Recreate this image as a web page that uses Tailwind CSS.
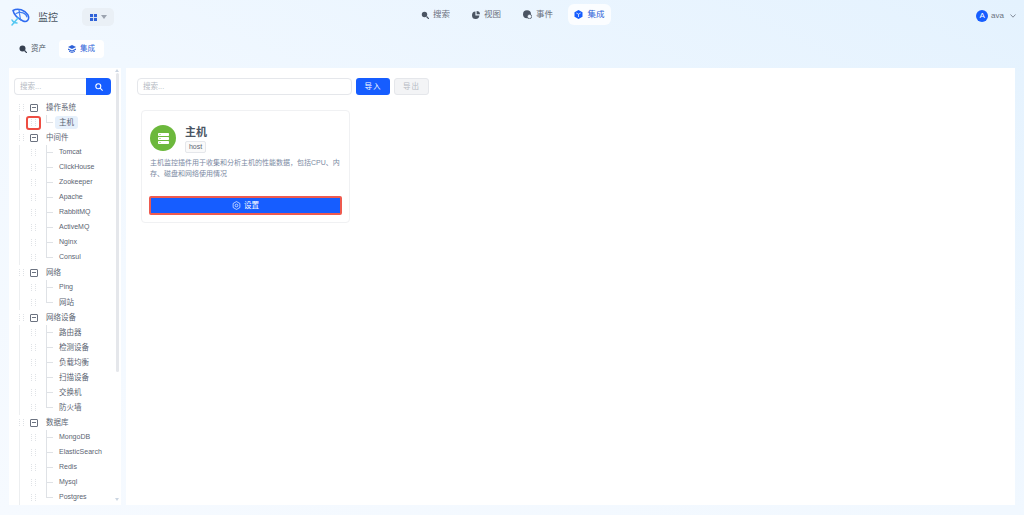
<!DOCTYPE html>
<html lang="zh">
<head>
  <meta charset="UTF-8">
  <title>监控</title>
  <script src="https://cdn.jsdelivr.net/npm/@tailwindcss/browser@4"></script>
</head>
<body class="w-[1024px] h-[515px] overflow-hidden bg-linear-to-tr from-[#f6faff] via-[#f1f8ff] to-[#e4f2fe] font-['Liberation_Sans','Noto_Sans_CJK_SC',sans-serif] text-[7.5px] text-[#5b6472]">
  <!-- top bar -->
  <header class="h-[34px] flex items-center relative">
    <div class="w-[126px] flex items-center pl-[10px]">
      <svg class="w-[20px] h-[20px]" viewBox="0 0 20 20" fill="none">
        <path d="M3 3.500C8 .5 15 3 18 8c2 4-1 8-5 6-4-2-9-6-10-10.500z" stroke="#2f6bf0" stroke-width="1.500"/>
        <path d="M6 6.500C11 4 16 6 17 10M9 3l1.500 10" stroke="#3f7df3" stroke-width="1.200" stroke-linecap="round"/>
        <path d="M2 18l6-7M2 13c1 2 3 3 5 3" stroke="#54c8f2" stroke-width="1.500" stroke-linecap="round"/>
      </svg>
      <span class="ml-[8px] text-[10px] text-[#4b5563]">监控</span>
      <div class="ml-[24px] w-[32px] h-[18px] rounded-[5px] bg-[#eaf0f6] flex items-center justify-center gap-[4px] shrink-0">
        <svg class="w-[7px] h-[7px]" viewBox="0 0 8 8" fill="#2f62d8"><rect width="3.500" height="3.500"/><rect x="4.500" width="3.500" height="3.500"/><rect y="4.500" width="3.500" height="3.500"/><rect x="4.500" y="4.500" width="3.500" height="3.500"/></svg>
        <svg class="w-[6px] h-[4px]" viewBox="0 0 6 4" fill="#9ca3af"><path d="M0 0h6L3 4z"/></svg>
      </div>
    </div>
    <nav class="absolute left-[410px] top-[4px] h-[21px] flex items-center text-[8.5px]">
      <div class="w-[51px] h-[21px] flex items-center justify-center gap-[4px] text-[#6b7280]">
        <svg class="w-[8px] h-[8px]" viewBox="0 0 8 8"><circle cx="3.500" cy="3.500" r="2.700" fill="#4b5563"/><path d="M5.500 5.500L8 8" stroke="#4b5563" stroke-width="1.200"/></svg><span>搜索</span>
      </div>
      <div class="w-[51px] h-[21px] flex items-center justify-center gap-[4px] text-[#6b7280]">
        <svg class="w-[8px] h-[8px]" viewBox="0 0 8 8" fill="#4b5563"><path d="M3.400.6v4h4A3.700 3.700 0 1 1 3.400.6z"/><path d="M4.600 0A3.400 3.400 0 0 1 8 3.200H4.600z"/></svg><span>视图</span>
      </div>
      <div class="w-[52px] h-[21px] flex items-center justify-center gap-[4px] text-[#6b7280]">
        <svg class="w-[9px] h-[9px]" viewBox="0 0 9 9"><circle cx="4" cy="4.300" r="4" fill="#4b5563"/><circle cx="6.500" cy="6.500" r="2.200" fill="#eef6fe" stroke="#4b5563" stroke-width=".8"/></svg><span>事件</span>
      </div>
      <div class="ml-[4px] w-[43px] h-[21px] rounded-[6px] bg-white/80 flex items-center justify-center gap-[4px] text-[#2f62d8]">
        <svg class="w-[9px] h-[9px]" viewBox="0 0 9 9" fill="#165dff"><path d="M4.500 0L8.500 2.200v4.600L4.500 9 .5 6.800V2.200z"/><path d="M2.300 3l2.200 1.200L6.700 3M4.500 4.200V7" stroke="#fff" stroke-width=".7" fill="none"/></svg><span>集成</span>
      </div>
    </nav>
    <div class="ml-auto mr-[8px] mb-[2px] flex items-center gap-[3px] text-[#6b7280]">
      <div class="w-[12px] h-[12px] rounded-full bg-[#165dff] text-white text-[8px] flex items-center justify-center">A</div>
      <span class="text-[8px]">ava</span>
      <svg class="w-[6px] h-[4px] ml-[3px]" viewBox="0 0 6 4" fill="none" stroke="#6b7280" stroke-width=".8"><path d="M.5.5L3 3.200 5.500.5"/></svg>
    </div>
  </header>

  <!-- sub tabs -->
  <div class="h-[34px] flex items-start pt-[6px] pl-[10px] gap-[4px]">
    <div class="w-[45px] h-[18px] flex items-center justify-center gap-[4px] text-[#4b5563]">
      <svg class="w-[8px] h-[8px]" viewBox="0 0 8 8"><circle cx="3.500" cy="3.500" r="3" fill="#374151"/><path d="M5.500 5.500L8 8" stroke="#374151" stroke-width="1.200"/></svg><span>资产</span>
    </div>
    <div class="w-[45px] h-[18px] rounded-[4px] bg-white flex items-center justify-center gap-[4px] text-[#2f62d8]">
      <svg class="w-[8px] h-[8px]" viewBox="0 0 8 8" fill="#2f62d8"><path d="M4 0l4 2-4 2-4-2z"/><path d="M0 3.600l4 2 4-2v1.200l-4 2-4-2z"/><path d="M1 5.800l3 1.500 3-1.500V6.800L4 8 1 6.800z"/></svg><span>集成</span>
    </div>
  </div>

  <div class="flex gap-[5px] pl-[9px] pr-[9px] h-[437px]">
    <!-- tree panel -->
    <aside class="w-[112px] h-full bg-white overflow-hidden relative shrink-0">
      <div class="w-[6px] absolute right-[1px] top-0 bottom-0 flex flex-col items-center">
        <svg class="w-[4px] h-[3px] mt-[1px]" viewBox="0 0 4 3" fill="#cbd5e1"><path d="M2 0l2 3H0z"/></svg>
        <div class="w-[3px] mt-[1px] h-[299px] rounded-full bg-[#e5e7eb]"></div>
        <svg class="w-[4px] h-[3px] mt-auto mb-[4px]" viewBox="0 0 4 3" fill="#cbd5e1"><path d="M2 3l2-3H0z"/></svg>
      </div>
      <div class="pl-[5px] pt-[10px] flex">
        <div class="w-[72px] h-[17px] border border-[#e5e7eb] border-r-0 rounded-l-[4px] text-[#b5bac3] flex items-center pl-[5px]">搜索...</div>
        <div class="w-[25px] h-[17px] bg-[#165dff] rounded-r-[4px] flex items-center justify-center">
          <svg class="w-[8px] h-[8px]" viewBox="0 0 8 8" fill="none" stroke="#fff" stroke-width="1.100"><circle cx="3.300" cy="3.300" r="2.500"/><path d="M5.200 5.200L7.600 7.600"/></svg>
        </div>
      </div>
      <div id="tree" class="mt-[5px]">
        <div class="h-[15px] flex items-center pl-[10px]"><span class="w-[5px] h-[7px] border-x border-dotted border-[#dfe2e6] mr-[6px]"></span><span class="w-[8px] h-[8px] border border-[#6b7280] rounded-[1px] flex items-center justify-center mr-[8px]"><span class="w-[4px] h-px bg-[#6b7280]"></span></span><span>操作系统</span></div>
        <div class="h-[15px] flex items-center pl-[10px]">
          <span class="w-px h-full bg-[#eceef0]"></span>
          <span class="w-[15px] h-[14px] ml-[6px] border-2 border-[#ee4d42] rounded-[3px] flex items-center justify-center"><span class="w-[5px] h-[7px] border-x border-dotted border-[#dfe2e6]"></span></span>
          <span class="w-px h-[8px] self-start ml-[5px] bg-[#dfe2e6]"></span>
          <span class="w-[6px] h-px bg-[#dfe2e6]"></span>
          <span class="h-[13px] ml-[2px] px-[4px] rounded-[3px] bg-[#e6f0fb] flex items-center">主机</span>
        </div>
      </div>
    </aside>

    <!-- main panel -->
    <main class="w-[889px] h-full bg-white">
      <div class="pl-[11px] pt-[10px] flex items-center">
        <div class="w-[215px] h-[17px] border border-[#e5e7eb] rounded-[4px] text-[#b5bac3] flex items-center pl-[5px]">搜索...</div>
        <button class="ml-[4px] w-[34px] h-[17px] bg-[#165dff] rounded-[3px] text-white tracking-[1px]">导入</button>
        <button class="ml-[4px] w-[35px] h-[17px] bg-[#f3f4f6] border border-[#e5e7eb] rounded-[3px] text-[#b5bac3] tracking-[1px]">导出</button>
      </div>
      <div class="ml-[15px] mt-[15px] w-[209px] h-[113px] border border-[#f0f1f3] rounded-[4px] px-[7px] pt-[13px] flex flex-col">
        <div class="flex items-start pl-[1px]">
          <div class="mt-[1px] w-[26px] h-[26px] rounded-full bg-[#6cb83c] flex items-center justify-center">
            <svg class="w-[11px] h-[11px]" viewBox="0 0 11 11" fill="#fff"><rect width="11" height="3" rx=".7"/><rect y="4" width="11" height="3" rx=".7"/><rect y="8" width="11" height="3" rx=".7"/><circle cx="2" cy="1.500" r=".6" fill="#6cb83c"/><circle cx="2" cy="5.500" r=".6" fill="#6cb83c"/><circle cx="2" cy="9.500" r=".6" fill="#6cb83c"/></svg>
          </div>
          <div class="ml-[9px]">
            <div class="mt-[1px] text-[11px] font-bold leading-[14px] text-[#4b5563]">主机</div>
            <div class="mt-[2px] w-[21px] h-[12px] border border-[#e5e7eb] rounded-[2px] bg-[#fafafa] text-[7px] flex items-center justify-center">host</div>
          </div>
        </div>
        <p class="mt-[4px] pl-[1px] w-[192px] text-[7px] leading-[11px] text-[#7b8aa3]">主机监控插件用于收集和分析主机的性能数据，包括CPU、内存、磁盘和网络使用情况</p>
        <button class="mt-auto mb-[7px] w-full h-[19px] shrink-0 bg-[#165dff] border-2 border-[#ee5a4f] rounded-[2px] text-white flex items-center justify-center gap-[3px]">
          <svg class="w-[9px] h-[9px]" viewBox="0 0 8 8" fill="none" stroke="#fff" stroke-width=".6"><path d="M4 .5l3 1.700v3.600L4 7.500 1 5.800V2.200z"/><circle cx="4" cy="4" r="1.200"/></svg>
          <span>设置</span>
        </button>
      </div>
    </main>
  </div>

  <script>
    const groups = [
      ['中间件', ['Tomcat','ClickHouse','Zookeeper','Apache','RabbitMQ','ActiveMQ','Nginx','Consul']],
      ['网络', ['Ping','网站']],
      ['网络设备', ['路由器','检测设备','负载均衡','扫描设备','交换机','防火墙']],
      ['数据库', ['MongoDB','ElasticSearch','Redis','Mysql','Postgres']]
    ];
    const tree = document.getElementById('tree');
    groups.forEach(([name, items]) => {
      tree.insertAdjacentHTML('beforeend', `<div class="h-[15px] flex items-center pl-[10px]"><span class="w-[5px] h-[7px] border-x border-dotted border-[#dfe2e6] mr-[6px]"></span><span class="w-[8px] h-[8px] border border-[#6b7280] rounded-[1px] flex items-center justify-center mr-[8px]"><span class="w-[4px] h-px bg-[#6b7280]"></span></span><span>${name}</span></div>`);
      items.forEach((item, i) => {
        const stem = i === items.length - 1 ? 'h-[8px] self-start' : 'h-full';
        const size = /^[A-Za-z]+$/.test(item) ? 'text-[7px]' : 'text-[7.5px]';
        tree.insertAdjacentHTML('beforeend', `<div class="h-[15px] flex items-center pl-[10px]"><span class="w-px h-full bg-[#eceef0]"></span><span class="w-[5px] h-[7px] ml-[11px] border-x border-dotted border-[#dfe2e6]"></span><span class="w-px ml-[10px] bg-[#dfe2e6] ${stem}"></span><span class="w-[6px] h-px bg-[#dfe2e6]"></span><span class="ml-[6px] ${size}">${item}</span></div>`);
      });
    });
  </script>
</body>
</html>
